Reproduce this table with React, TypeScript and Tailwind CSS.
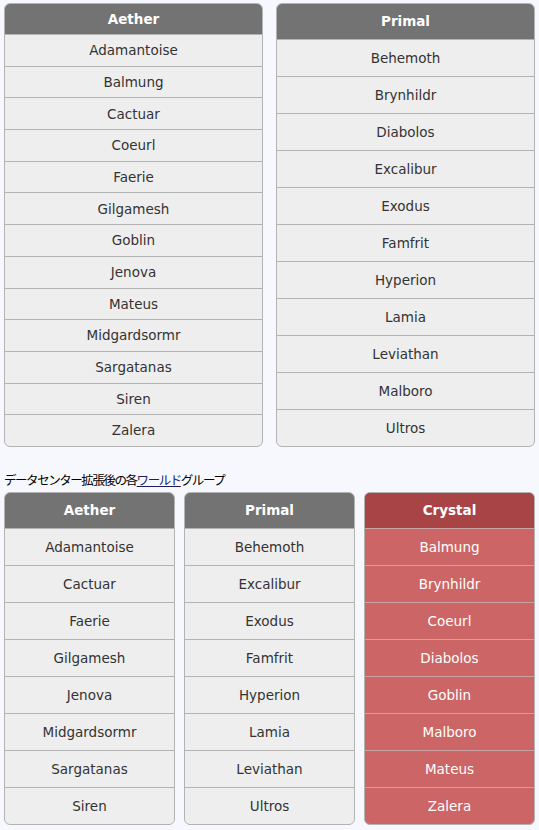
import React from "react";

type Props = {
  title: string;
  items: string[];
  width: string;
  red?: boolean;
  compact?: boolean;
};

function WorldTable({ title, items, width, red, compact }: Props) {
  return (
    <div
      className={`flex flex-col ${width} border border-[#b3b3b3] rounded-[6px] overflow-hidden ${
        red ? "bg-[#cc6666]" : "bg-[#eeeeee]"
      }`}
    >
      <div
        className={`flex items-center justify-center ${
          compact ? "h-[30px]" : "h-[35px]"
        } font-bold text-[13.5px] text-white ${red ? "bg-[#a94446]" : "bg-[#737373]"}`}
      >
        {title}
      </div>
      {items.map((it) => (
        <div
          key={it}
          className={`flex items-center justify-center border-t text-[13.5px] ${
            compact ? "flex-1" : "h-[37px]"
          } ${red ? "border-[#c9a3a3] text-white" : "border-[#b3b3b3] text-[#333333]"}`}
        >
          {it}
        </div>
      ))}
    </div>
  );
}

export default function App() {
  return (
    <div
      className="min-h-[830px] w-[539px] bg-[#f7f8fd] pt-[3px] px-[4px]"
      style={{ fontFamily: '"DejaVu Sans", Verdana, sans-serif' }}
    >
      <div className="flex gap-[13px] items-stretch">
        <WorldTable
          title="Aether"
          width="w-[259px]"
          compact
          items={[
            "Adamantoise",
            "Balmung",
            "Cactuar",
            "Coeurl",
            "Faerie",
            "Gilgamesh",
            "Goblin",
            "Jenova",
            "Mateus",
            "Midgardsormr",
            "Sargatanas",
            "Siren",
            "Zalera",
          ]}
        />
        <WorldTable
          title="Primal"
          width="w-[259px]"
          items={[
            "Behemoth",
            "Brynhildr",
            "Diabolos",
            "Excalibur",
            "Exodus",
            "Famfrit",
            "Hyperion",
            "Lamia",
            "Leviathan",
            "Malboro",
            "Ultros",
          ]}
        />
      </div>
      <div
        className="mt-[25px] mb-[4px] h-[16px] leading-[16px] text-[12.5px] tracking-[-1.45px] text-black"
        style={{ fontFamily: '"Noto Sans CJK JP", sans-serif' }}
      >
        データセンター拡張後の各
        <span className="underline text-[#1d1d5c]">ワールド</span>
        グループ
      </div>
      <div className="flex gap-[9px]">
        <WorldTable
          title="Aether"
          width="w-[171px]"
          items={[
            "Adamantoise",
            "Cactuar",
            "Faerie",
            "Gilgamesh",
            "Jenova",
            "Midgardsormr",
            "Sargatanas",
            "Siren",
          ]}
        />
        <WorldTable
          title="Primal"
          width="w-[171px]"
          items={[
            "Behemoth",
            "Excalibur",
            "Exodus",
            "Famfrit",
            "Hyperion",
            "Lamia",
            "Leviathan",
            "Ultros",
          ]}
        />
        <WorldTable
          title="Crystal"
          width="w-[171px]"
          red
          items={[
            "Balmung",
            "Brynhildr",
            "Coeurl",
            "Diabolos",
            "Goblin",
            "Malboro",
            "Mateus",
            "Zalera",
          ]}
        />
      </div>
    </div>
  );
}
